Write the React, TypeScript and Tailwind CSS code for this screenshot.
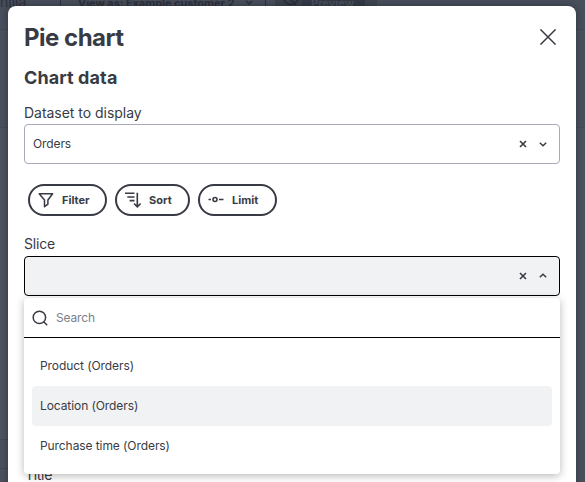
import React from "react";

function Clear() {
  return (
    <svg width="8" height="8" viewBox="0 0 8 8" fill="none" stroke="#393b44" strokeWidth="1.6">
      <path d="M1 1l6 6M7 1L1 7" />
    </svg>
  );
}

function Chevron({ up = false }: { up?: boolean }) {
  return (
    <svg width="8" height="6" viewBox="0 0 8 6" fill="none" stroke="#393b44" strokeWidth="1.5">
      <path d={up ? "M.8 4.3L4 1.3l3.2 3" : "M.8 1.8L4 4.8l3.2-3"} />
    </svg>
  );
}

function FilterIcon() {
  return (
    <svg width="16" height="16" viewBox="0 0 16 16" fill="none" stroke="#393b44" strokeWidth="1.5" strokeLinejoin="round">
      <path d="M1.2 1.7h13.4L9.9 8v4.2l-3.4 2.5V8z" />
    </svg>
  );
}

function SortIcon() {
  return (
    <svg width="16" height="16" viewBox="0 0 16 16" fill="none" stroke="#393b44" strokeWidth="1.6">
      <path d="M0 1.3h9.5M2.3 5h7.2M4.6 8.6h4.9M12.3.7v14M9 11.5l3.3 3.3 3.3-3.3" />
    </svg>
  );
}

function LimitIcon() {
  return (
    <svg width="16" height="16" viewBox="0 0 16 16" fill="none" stroke="#393b44" strokeWidth="1.6">
      <circle cx="7" cy="7.5" r="2" />
      <path d="M.5 7.5H3M11 7.5h4.5" />
    </svg>
  );
}

function Pill({ icon, width, children }: { icon: React.ReactNode; width: string; children: string }) {
  return (
    <button className={`flex h-8 items-center gap-2 rounded-full border-2 border-[#393b44] pl-2 text-[11px] font-bold ${width}`}>
      {icon}
      <span>{children}</span>
    </button>
  );
}

export default function App() {
  return (
    <div className="relative h-[482px] w-[585px] overflow-hidden bg-[#4a515d] font-['Inter','Liberation_Sans',sans-serif] text-[#393b44]">
      <div className="h-[30px] border-b border-[#424854] bg-[#484e5b]" />
      <div className="mt-[97px] h-[312px] border-t border-[#454c58] bg-[#4b535e]" />
      <div className="absolute left-0 top-[439px] h-[30px] w-2 border-y border-[#424955]" />
      <div className="absolute left-0 top-[-6px] h-4 text-[14px] leading-4 text-[#2d313c]">nilla</div>
      <div className="absolute left-[60px] top-[-12px] h-7 w-[206px] rounded-sm border-x border-[#2d313c]" />
      <div className="absolute left-[78px] top-[-5px] whitespace-nowrap text-[11px] font-bold leading-4 tracking-[-0.05px] text-[#2d313c]">View as: Example customer 2</div>
      <svg className="absolute left-[245px] top-0" width="8" height="6" viewBox="0 0 8 6" fill="none" stroke="#2d313c" strokeWidth="1.5"><path d="M1 1l3 3 3-3" /></svg>
      <div className="absolute left-[275px] top-0 h-1.5 w-7 bg-[#3c424e]" />
      <svg className="absolute left-[282px] top-[-8px]" width="18" height="14" viewBox="0 0 18 14" fill="none" stroke="#2b2f39" strokeWidth="1.6"><path d="M2 8c3-5 10-5 14 0-4 6-11 6-14 0M3 2l11 11" /></svg>
      <div className="absolute left-[302px] top-0 h-1.5 w-[63px] bg-[#343a47]" />
      <div className="absolute left-[311px] top-[-5px] text-[11px] font-bold leading-4 text-[#4b515d]">Preview</div>
      <div className="absolute left-[365px] top-0 h-1.5 w-3 bg-[#3f4551]" />

      <main className="absolute left-2 top-1.5 h-[490px] w-[568px] rounded-t-[8px] bg-white px-4 shadow-[0_0_6px_rgba(20,24,34,0.5)]">
        <header className="flex h-[62px] items-center justify-between">
          <h1 className="pt-px text-[24px] font-bold leading-8 tracking-[-0.5px]">Pie chart</h1>
          <svg className="mr-1" width="16" height="16" viewBox="0 0 16 16" fill="none" stroke="#393b44" strokeWidth="1.5"><path d="M.4.4l15.2 15.2M15.6.4L.4 15.6" /></svg>
        </header>
        <h2 className="h-9 text-[18px] font-bold leading-5 tracking-[0.1px]">Chart data</h2>
        <label className="block h-5 pt-px text-[14px] leading-4 tracking-[-0.03px]">Dataset to display</label>
        <div className="flex h-10 items-center rounded border border-[#a6aaba] pl-2 pr-3">
          <span className="flex-1 text-[12px] tracking-[-0.1px]">Orders</span>
          <div className="flex items-center gap-3"><Clear /><Chevron /></div>
        </div>
        <div className="mt-5 flex gap-2 pl-1">
          <Pill icon={<FilterIcon />} width="w-[79px]">Filter</Pill>
          <Pill icon={<SortIcon />} width="w-[75px]">Sort</Pill>
          <Pill icon={<LimitIcon />} width="w-[79px]">Limit</Pill>
        </div>
        <label className="mt-5 block h-5 text-[14px] leading-4 tracking-[-0.2px]">Slice</label>
        <div className="flex h-10 items-center justify-end gap-3 rounded border border-black bg-[#f1f2f4] pr-3"><Clear /><Chevron up /></div>
        <div className="mt-[171px] pl-px text-[14px] leading-4 tracking-[-0.3px]">Title</div>

        <section className="absolute left-4 top-[292px] h-[176px] w-[536px] rounded bg-white shadow-[0_2px_9px_rgba(0,0,0,0.28)]">
          <div className="flex h-10 items-center border-b border-black pl-2">
            <svg width="16" height="16" viewBox="0 0 16 16" fill="none" stroke="#393b44" strokeWidth="1.5"><circle cx="7.4" cy="7.4" r="6.2" /><path d="M11.7 11.7l3.5 3.5" /></svg>
            <span className="ml-2 text-[12px] tracking-[-0.15px] text-[#7b7e8b]">Search</span>
          </div>
          <div className="px-2 pt-2 text-[12px] tracking-[-0.08px]">
            <div className="flex h-10 items-center px-2">Product (Orders)</div>
            <div className="flex h-10 items-center rounded bg-[#f1f2f4] px-2">Location (Orders)</div>
            <div className="flex h-10 items-center px-2">Purchase time (Orders)</div>
          </div>
        </section>
      </main>
    </div>
  );
}
